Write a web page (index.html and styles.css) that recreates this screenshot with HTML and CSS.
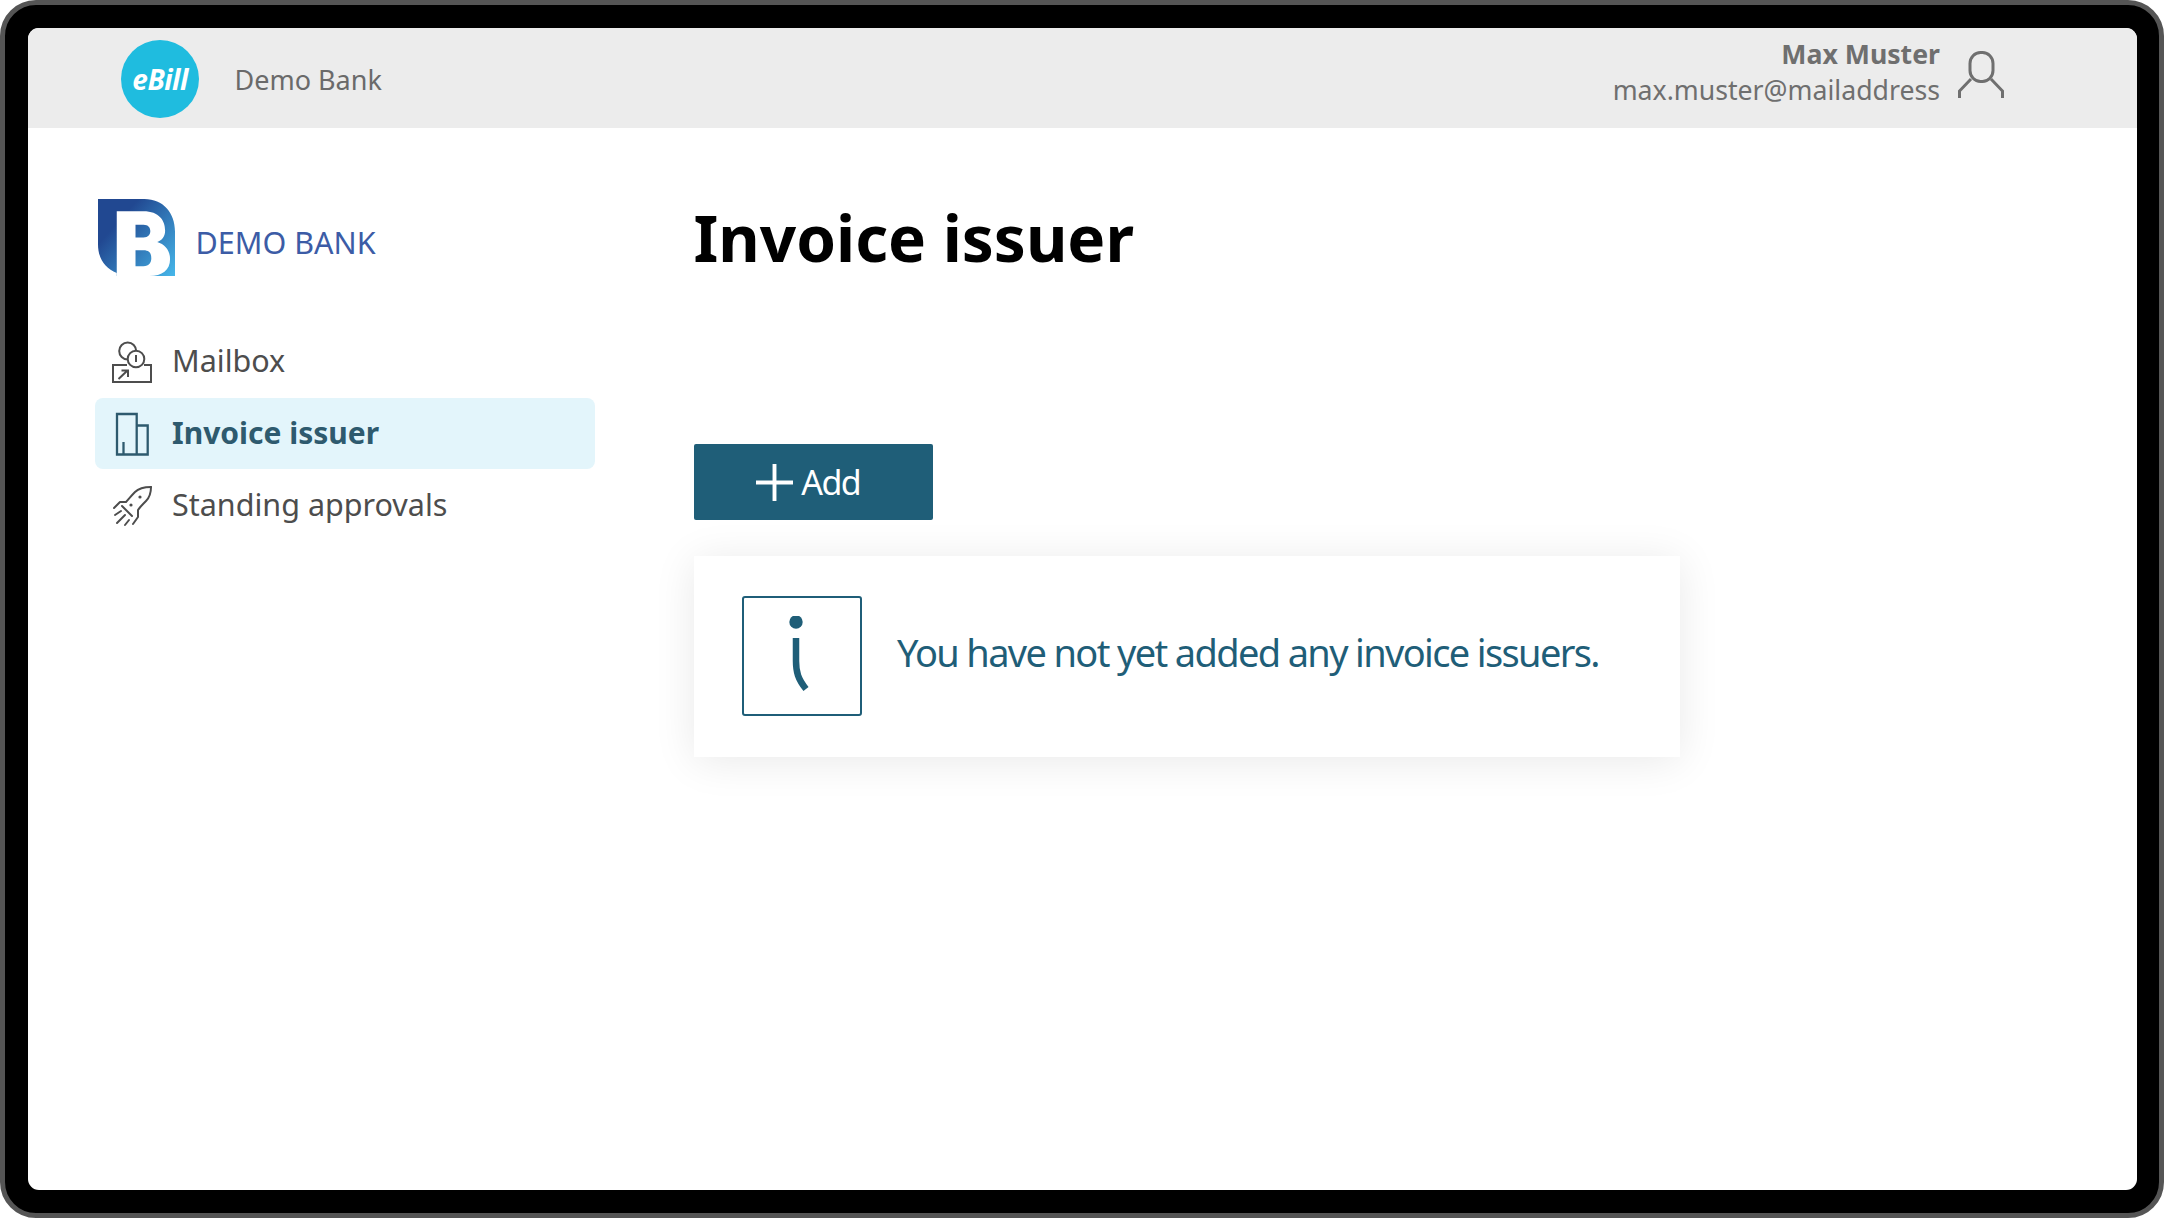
FILE: index.html
```html
<!DOCTYPE html>
<html lang="en">
<head>
<meta charset="utf-8">
<title>Invoice issuer</title>
<link rel="stylesheet" href="styles.css">
</head>
<body>
<div class="device">
  <div class="screen">
    <header class="topbar">
      <div class="brand">
        <div class="ebill"><span>eBill</span></div>
        <span class="bank-name">Demo Bank</span>
      </div>
      <div class="user">
        <div class="user-text">
          <div class="user-name">Max Muster</div>
          <div class="user-mail">max.muster@mailaddress</div>
        </div>
        <svg class="user-icon" viewBox="0 0 46 48" fill="none" stroke="#6f6f6f" stroke-width="3">
          <rect x="12" y="1.5" width="23" height="29" rx="10.5" ry="11"/>
          <path d="M13 28 L1.5 40 V47 M33 28 L44.5 40 V47"/>
        </svg>
      </div>
    </header>
    <div class="body">
      <aside class="side">
        <div class="logo">
          <svg class="logo-mark" viewBox="0 0 78 78">
            <defs>
              <linearGradient id="lg" x1="0.15" y1="0.25" x2="1" y2="1">
                <stop offset="0.1" stop-color="#214891"/>
                <stop offset="1" stop-color="#46b7ea"/>
              </linearGradient>
            </defs>
            <path fill="url(#lg)" d="M0 0 H47 C66 0 78 14 78 33 V78 H19 V75 C7 70 0 60 0 46 Z"/>
            <path fill="#fff" d="M19 12.5 H46 C62 12.5 68 22 68 32 C68 38 65 42 60 43.5 C68 46 73 52 73 61 C73 72 65 78 52 78 H19 Z M38 26 V39 H46 C51 39 53 36 53 32.5 C53 29 51 26 46 26 Z M38 52 V68 H46 C52 68 54 64 54 60 C54 55 52 52 46 52 Z"/>
          </svg>
          <span class="logo-text">DEMO BANK</span>
        </div>
        <nav class="nav">
          <a class="nav-item">
            <svg class="nav-icon" viewBox="0 0 40 44" fill="none" stroke="#4d4d4d" stroke-width="2">
              <circle cx="15.7" cy="11" r="8.5"/>
              <circle cx="24" cy="19" r="8.3" fill="#fff"/>
              <path d="M24 15 V22"/>
              <path d="M15 25 H1 V42 H39 V25 H32"/>
              <path d="M6.5 39 L15.5 30.5 M9.5 30.5 H16 V37"/>
            </svg>
            <span>Mailbox</span>
          </a>
          <a class="nav-item active">
            <svg class="nav-icon" viewBox="0 0 40 44" fill="none" stroke="#2e5a6e" stroke-width="2.3">
              <path d="M5 2 H24.7 V42.5 H5 Z M24.7 13.5 H35.7 V42.5 H24.7"/>
              <path d="M11.5 30 V42.5"/>
            </svg>
            <span>Invoice issuer</span>
          </a>
          <a class="nav-item">
            <svg class="nav-icon" viewBox="0 0 40 44" fill="none" stroke="#4d4d4d" stroke-width="2" stroke-linecap="round" stroke-linejoin="round">
              <path d="M39 3 C33 3 27 4 23 8 C19 12 17 15 14 18 L8 18 L2 24"/>
              <path d="M39 3 C39 8 38 13 34 17 C31 20 28 23 26 26 L26 33 L21 40"/>
              <path d="M10 22 L20 32"/>
              <path d="M3 31 L9 27 M5 39 L13 31 M13 41 L17 36"/>
              <circle cx="19" cy="21" r="1.6" fill="#4d4d4d" stroke="none"/>
              <circle cx="28" cy="13" r="1.6" fill="#4d4d4d" stroke="none"/>
            </svg>
            <span>Standing approvals</span>
          </a>
        </nav>
      </aside>
      <main class="main">
        <h1 class="title">Invoice issuer</h1>
        <button class="add">
          <svg class="plus" viewBox="0 0 38 38" stroke="#fff" stroke-width="4"><path d="M0 19 H38 M19 0 V38"/></svg>
          <span>Add</span>
        </button>
        <section class="card">
          <div class="info-box">
            <svg class="info-i" viewBox="0 0 24 80" fill="none">
              <circle cx="8" cy="6" r="6.7" fill="#1f5e78"/>
              <path d="M8 22 V45 C8 56 10 63 18 73" stroke="#1f5e78" stroke-width="6.5"/>
            </svg>
          </div>
          <p class="message">You have not yet added any invoice issuers.</p>
        </section>
      </main>
    </div>
  </div>
</div>
</body>
</html>
```
FILE: styles.css
```css
* { box-sizing: border-box; }
html, body { margin: 0; height: 100%; background: #fff; }
body { font-family: "Noto Sans", sans-serif; overflow: hidden; }

.device {
  width: 2164px;
  height: 1218px;
  background: #000;
  border: 5px solid #555;
  border-radius: 36px;
  padding: 23px 22px 23px 23px;
}
.screen {
  height: 100%;
  background: #fff;
  border-radius: 11px;
  overflow: hidden;
  display: flex;
  flex-direction: column;
}

.topbar {
  height: 100px;
  flex: none;
  background: #ececec;
  display: flex;
  justify-content: space-between;
  align-items: center;
  padding: 0 132px 0 93px;
}
.brand { display: flex; align-items: center; gap: 35.5px; }
.ebill {
  width: 78px;
  height: 78px;
  border-radius: 50%;
  background: #1fbcdf;
  color: #fff;
  display: flex;
  align-items: center;
  justify-content: center;
  margin-top: 2px;
}
.ebill span {
  font-family: "Open Sans", sans-serif;
  font-size: 28px;
  font-weight: 700;
  font-style: italic;
  letter-spacing: -0.5px;
}
.bank-name { font-size: 27px; color: #6a6a6a; margin-top: 2px; }

.user { display: flex; align-items: center; gap: 19px; color: #6f6f6f; }
.user-text { text-align: right; margin-bottom: 12px; }
.user-name { font-size: 26.67px; font-weight: 700; line-height: 36px; }
.user-mail { font-size: 26.67px; line-height: 36px; }
.user-icon { width: 46px; height: 48px; margin: 0 1px 7px -1px; }

.body { flex: 1; display: flex; }
.side { width: 665.5px; flex: none; padding: 71px 0 0 67px; }
.logo { display: flex; align-items: center; gap: 20.5px; margin-left: 3px; }
.logo-mark { width: 77px; height: 77px; flex: none; }
.logo-text { font-size: 30.5px; color: #3c5ca6; margin-top: 8px; }

.nav { width: 500px; margin-top: 50px; display: flex; flex-direction: column; }
.nav-item {
  height: 71px;
  margin-bottom: 1px;
  padding: 0 0 3px 17px;
  border-radius: 8px;
  display: flex;
  align-items: center;
  gap: 20px;
  font-size: 30.5px;
  color: #4d4d4d;
}
.nav-icon { width: 40px; height: 44px; flex: none; margin-top: 3px; }
.nav-item.active { background: #e3f5fb; color: #2e5a6e; font-weight: 700; font-size: 30px; }

.main { flex: 1; padding-top: 70px; }
.title { margin: 0; font-size: 63.8px; line-height: 80px; font-weight: 700; color: #000; }
.add {
  margin-top: 166px;
  width: 239.5px;
  height: 76px;
  background: #1f5e78;
  border: 0;
  border-radius: 2px;
  color: #fff;
  font: 400 34px "Noto Sans", sans-serif;
  letter-spacing: -1.5px;
  display: flex;
  align-items: center;
  justify-content: center;
  gap: 8px;
  padding: 0 10px 0 0;
}
.plus { width: 37px; height: 37px; }
.card {
  margin-top: 36px;
  width: 986px;
  height: 201px;
  background: #fff;
  box-shadow: 0 4px 40px rgba(0, 0, 0, 0.09);
  display: flex;
  align-items: center;
  gap: 35px;
  padding: 0 48.5px;
}
.info-box {
  width: 120px;
  height: 120px;
  flex: none;
  margin-top: -1px;
  border: 2px solid #1f5e78;
  border-radius: 3px;
  display: flex;
  align-items: center;
  justify-content: center;
}
.info-i { width: 24px; height: 80px; margin-right: 4px; }
.message { margin: 0 0 10px; font-size: 38px; letter-spacing: -1.65px; color: #1f5e78; white-space: nowrap; }
```
